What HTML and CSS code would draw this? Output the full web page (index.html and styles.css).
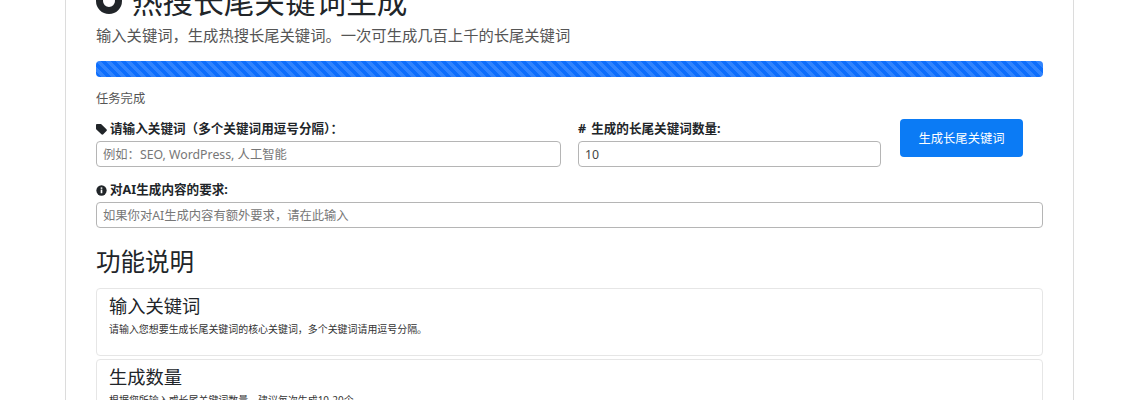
FILE: index.html
```html
<!DOCTYPE html>
<html lang="zh-CN">
<head>
    <meta charset="UTF-8">
    <meta name="viewport" content="width=device-width, initial-scale=1.0">
    <title>热搜长尾关键词生成</title>
    <link rel="stylesheet" href="styles.css">
</head>
<body>
    <div class="panel">
        <h1 class="title">
            <svg class="title-icon" viewBox="0 0 26 26"><circle cx="13" cy="13" r="9.5" fill="none" stroke="#212529" stroke-width="7"/></svg>
            热搜长尾关键词生成
        </h1>
        <p class="lead">输入关键词，生成热搜长尾关键词。一次可生成几百上千的长尾关键词</p>

        <div class="progress"><div class="progress-bar"></div></div>
        <div class="status">任务完成</div>

        <form class="form-row">
            <div class="field field-keywords">
                <label class="field-label">
                    <svg class="label-icon" viewBox="0 0 12 12"><path d="M0 1.2C0 .5.5 0 1.2 0h3.600c.4 0 .7.1 1 .4l5.600 5.300c.6.6.6 1.400 0 2l-3.500 3.600c-.6.6-1.400.6-2 0L.4 5.900C.1 5.600 0 5.200 0 4.800z" fill="#212529"/></svg>
                    请输入关键词（多个关键词用逗号分隔）：
                </label>
                <input class="input" type="text" placeholder="例如：SEO, WordPress, 人工智能">
            </div>
            <div class="field field-count">
                <label class="field-label"><span class="hash">#</span>生成的长尾关键词数量:</label>
                <input class="input" type="text" value="10">
            </div>
            <button class="btn" type="button">生成长尾关键词</button>
        </form>

        <div class="field field-extra">
            <label class="field-label">
                <svg class="label-icon" viewBox="0 0 12 12"><circle cx="6" cy="6" r="5.600" fill="#212529"/><rect x="5.100" y="5" width="1.800" height="4" fill="#fff"/><rect x="5.100" y="2.600" width="1.800" height="1.600" fill="#fff"/></svg>
                对AI生成内容的要求:
            </label>
            <input class="input" type="text" placeholder="如果你对AI生成内容有额外要求，请在此输入">
        </div>

        <h2 class="section-title">功能说明</h2>

        <div class="card">
            <h5 class="card-title">输入关键词</h5>
            <p class="card-text">请输入您想要生成长尾关键词的核心关键词，多个关键词请用逗号分隔。</p>
        </div>
        <div class="card">
            <h5 class="card-title">生成数量</h5>
            <p class="card-text">根据您所输入或长尾关键词数量，建议每次生成10-20个。</p>
        </div>
    </div>
</body>
</html>
```

FILE: styles.css
```css
html, body {
    height: 400px;
    overflow: hidden;
}
body {
    margin: 0;
    background: #fff;
    color: #212529;
    font-family: "Noto Sans", "Noto Sans CJK SC", sans-serif;
    font-size: 12.3px;
}
.panel {
    box-sizing: border-box;
    width: 1009px;
    margin: -22px 0 0 65px;
    padding: 0 30px;
    border-left: 1px solid #dcdcdc;
    border-right: 1px solid #dcdcdc;
}
.title {
    display: flex;
    align-items: center;
    gap: 10px;
    height: 46px;
    margin: 0;
    font-size: 30.6px;
    font-weight: 400;
    line-height: 46px;
}
.title-icon {
    width: 26px;
    height: 26px;
}
.lead {
    margin: -1px 0 0;
    height: 24px;
    font-size: 15.3px;
    line-height: 24px;
    color: #555;
}
.progress {
    height: 16px;
    margin-top: 14px;
    border-radius: 4px;
    overflow: hidden;
    background: #e9ecef;
}
.progress-bar {
    height: 100%;
    background-color: #0d6efd;
    background-image: linear-gradient(45deg, rgba(255,255,255,.15) 25%, transparent 25%, transparent 50%, rgba(255,255,255,.15) 50%, rgba(255,255,255,.15) 75%, transparent 75%, transparent);
    background-size: 10px 10px;
}
.status {
    margin-top: 13px;
    height: 18px;
    line-height: 18px;
    color: #555;
}
.form-row {
    display: flex;
    align-items: flex-start;
    margin-top: 11px;
}
.field {
    display: flex;
    flex-direction: column;
}
.field-keywords {
    width: 465px;
}
.field-count {
    width: 303px;
    margin-left: 17px;
}
.field-extra {
    margin-top: 13px;
}
.field-label {
    display: flex;
    align-items: center;
    gap: 3px;
    height: 16px;
    padding-top: 2px;
    margin-bottom: 4px;
    font-size: 12.6px;
    font-weight: 700;
    line-height: 16px;
}
.field-count .field-label {
    gap: 5px;
}
.label-icon {
    width: 11px;
    height: 11px;
}
.input {
    box-sizing: border-box;
    width: 100%;
    height: 26px;
    padding: 0 6px;
    border: 1px solid #b5b5b5;
    border-radius: 4px;
    background: #fff;
    color: #444;
    font-family: inherit;
    font-size: 12.3px;
}
.input::placeholder {
    color: #777;
    opacity: 1;
}
.btn {
    width: 123px;
    height: 38px;
    margin-left: 19px;
    border: 0;
    border-radius: 4px;
    background: #0b7bf5;
    color: #fff;
    font-family: inherit;
    font-size: 12.3px;
}
.section-title {
    margin: 16px 0 0;
    height: 36px;
    font-size: 24.5px;
    font-weight: 400;
    line-height: 36px;
}
.card {
    box-sizing: border-box;
    height: 68px;
    margin-top: 3px;
    padding: 5px 12px;
    border: 1px solid #e6e6e6;
    border-radius: 4px;
}
.section-title + .card {
    margin-top: 8px;
}
.card-title {
    margin: 0;
    height: 24px;
    font-size: 18.3px;
    font-weight: 400;
    line-height: 24px;
}
.card-text {
    margin: 4px 0 0;
    font-size: 9.95px;
    line-height: 15px;
    color: #333;
}
```
